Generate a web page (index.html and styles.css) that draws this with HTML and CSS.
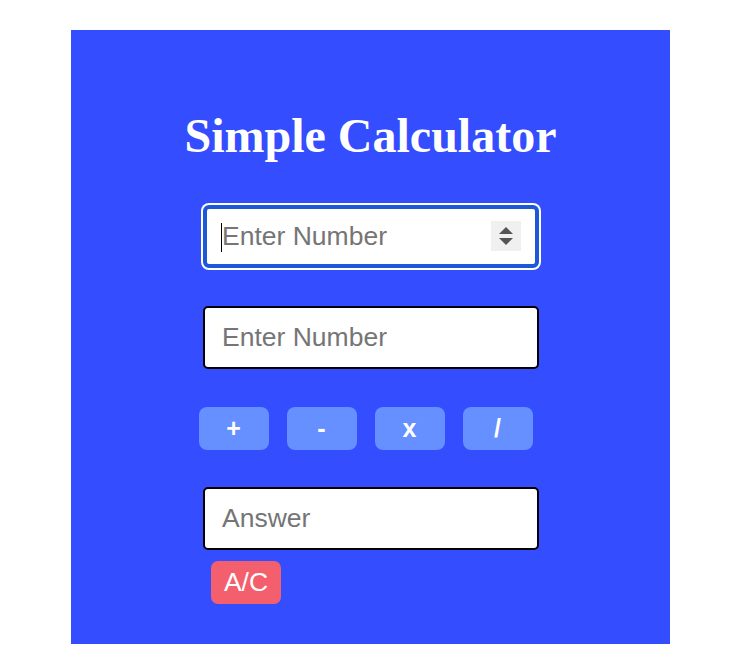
FILE: index.html
```html
<!DOCTYPE html>
<html>
<head>
<meta charset="utf-8">
<title>Simple Calculator</title>
<link rel="stylesheet" href="styles.css">
</head>
<body>
<div class="calc">
  <h1 class="title">Simple Calculator</h1>
  <div class="field field-focus">
    <input class="num num-focus" type="text" placeholder="Enter Number">
    <span class="caret"></span>
    <span class="spinner">
      <svg width="30" height="30" viewBox="0 0 30 30"><polygon points="15,6 22,13 8,13" fill="#555"/><polygon points="8,17 22,17 15,24" fill="#555"/></svg>
    </span>
  </div>
  <div class="field">
    <input class="num" type="text" placeholder="Enter Number">
  </div>
  <div class="ops">
    <button class="op">+</button>
    <button class="op">-</button>
    <button class="op">x</button>
    <button class="op">/</button>
  </div>
  <div class="field">
    <input class="num" type="text" placeholder="Answer">
  </div>
  <div class="clear-row">
    <button class="clear">A/C</button>
  </div>
</div>
</body>
</html>
```
FILE: styles.css
```css
html, body {
  margin: 0;
  padding: 0;
  background: #ffffff;
}
body {
  padding-top: 30px;
}
.calc {
  width: 599px;
  height: 614px;
  margin-left: 71px;
  background: #334dff;
  display: flex;
  flex-direction: column;
  align-items: center;
  box-sizing: border-box;
  padding-top: 82px;
}
.title {
  margin: 0;
  font-family: "Liberation Serif", "Times New Roman", serif;
  font-weight: bold;
  font-size: 48px;
  line-height: 1;
  color: #ffffff;
  height: 48px;
}
.field {
  position: relative;
  width: 336px;
  height: 63px;
  margin-left: 1px;
}
.field-focus {
  margin-top: 45px;
}
.field-focus + .field {
  margin-top: 38px;
}
.num {
  box-sizing: border-box;
  width: 336px;
  height: 63px;
  border: 2px solid #000;
  border-radius: 5px;
  background: #fff;
  padding: 0 0 0 17px;
  font-family: "Liberation Sans", Arial, sans-serif;
  font-size: 26.5px;
  color: #222;
  outline: none;
  margin: 0;
}
.num::placeholder {
  color: #757575;
}
.num-focus {
  border: 4px solid #1c58d8;
  border-radius: 6px;
  box-shadow: 0 0 0 2px #ffffff;
  padding-left: 15px;
}
.caret {
  position: absolute;
  left: 18px;
  top: 18px;
  width: 1px;
  height: 29px;
  background: #000;
}
.spinner {
  position: absolute;
  left: 288px;
  top: 16px;
  width: 30px;
  height: 30px;
  background: #f0f0f0;
  display: block;
}
.spinner svg {
  display: block;
}
.ops {
  display: flex;
  gap: 18px;
  margin-top: 38px;
  margin-right: 10px;
}
.op {
  width: 70px;
  height: 43px;
  border: none;
  border-radius: 8px;
  background: #668fff;
  color: #fff;
  font-family: "Liberation Sans", Arial, sans-serif;
  font-weight: bold;
  font-size: 25px;
  padding: 0;
  margin: 0;
}
.ops + .field {
  margin-top: 37px;
}
.clear-row {
  width: 336px;
  margin-left: 1px;
  margin-top: 11px;
  display: flex;
}
.clear {
  margin-left: 8px;
  width: 70px;
  height: 43px;
  border: none;
  border-radius: 7px;
  background: #f45f6d;
  color: #fff;
  font-family: "Liberation Sans", Arial, sans-serif;
  font-size: 26.5px;
  padding: 0;
}
```
